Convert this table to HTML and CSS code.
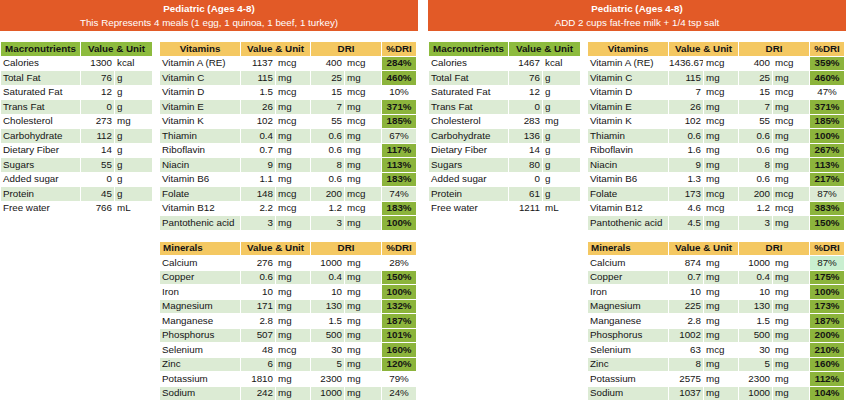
FILE: index.html
```html
<!DOCTYPE html>
<html>
<head>
<meta charset="utf-8">
<link rel="stylesheet" href="styles.css">
</head>
<body>
<div class="page">
  <section class="panel">
    <header class="banner">
      <div class="banner-title">Pediatric (Ages 4-8)</div>
      <div>This Represents 4 meals (1 egg, 1 quinoa, 1 beef, 1 turkey)</div>
    </header>
    <div class="panel-body">
      <table class="tbl macro">
        <colgroup><col class="c-name"><col class="c-num"><col class="c-unit"></colgroup>
        <tr class="head-green"><th class="center">Macronutrients</th><th colspan="2">Value &amp; Unit</th></tr>
        <tr><td class="name">Calories</td><td class="num">1300</td><td class="unit">kcal</td></tr>
        <tr class="alt"><td class="name">Total Fat</td><td class="num">76</td><td class="unit">g</td></tr>
        <tr><td class="name">Saturated Fat</td><td class="num">12</td><td class="unit">g</td></tr>
        <tr class="alt"><td class="name">Trans Fat</td><td class="num">0</td><td class="unit">g</td></tr>
        <tr><td class="name">Cholesterol</td><td class="num">273</td><td class="unit">mg</td></tr>
        <tr class="alt"><td class="name">Carbohydrate</td><td class="num">112</td><td class="unit">g</td></tr>
        <tr><td class="name">Dietary Fiber</td><td class="num">14</td><td class="unit">g</td></tr>
        <tr class="alt"><td class="name">Sugars</td><td class="num">55</td><td class="unit">g</td></tr>
        <tr><td class="name">Added sugar</td><td class="num">0</td><td class="unit">g</td></tr>
        <tr class="alt"><td class="name">Protein</td><td class="num">45</td><td class="unit">g</td></tr>
        <tr><td class="name">Free water</td><td class="num">766</td><td class="unit">mL</td></tr>
      </table>
      <div class="stack">
        <table class="tbl nutr">
          <colgroup><col class="n-name"><col class="n-num"><col class="n-unit"><col class="n-dnum"><col class="n-dunit"><col class="n-pct"></colgroup>
          <tr class="head-yellow"><th>Vitamins</th><th colspan="2">Value &amp; Unit</th><th colspan="2">DRI</th><th>%DRI</th></tr>
          <tr><td class="name">Vitamin A (RE)</td><td class="num">1137</td><td class="unit">mcg</td><td class="dnum">400</td><td class="dunit">mcg</td><td class="pct hi">284%</td></tr>
          <tr class="alt"><td class="name">Vitamin C</td><td class="num">115</td><td class="unit">mg</td><td class="dnum">25</td><td class="dunit">mg</td><td class="pct hi">460%</td></tr>
          <tr><td class="name">Vitamin D</td><td class="num">1.5</td><td class="unit">mcg</td><td class="dnum">15</td><td class="dunit">mcg</td><td class="pct">10%</td></tr>
          <tr class="alt"><td class="name">Vitamin E</td><td class="num">26</td><td class="unit">mg</td><td class="dnum">7</td><td class="dunit">mg</td><td class="pct hi">371%</td></tr>
          <tr><td class="name">Vitamin K</td><td class="num">102</td><td class="unit">mcg</td><td class="dnum">55</td><td class="dunit">mcg</td><td class="pct hi">185%</td></tr>
          <tr class="alt"><td class="name">Thiamin</td><td class="num">0.4</td><td class="unit">mg</td><td class="dnum">0.6</td><td class="dunit">mg</td><td class="pct">67%</td></tr>
          <tr><td class="name">Riboflavin</td><td class="num">0.7</td><td class="unit">mg</td><td class="dnum">0.6</td><td class="dunit">mg</td><td class="pct hi">117%</td></tr>
          <tr class="alt"><td class="name">Niacin</td><td class="num">9</td><td class="unit">mg</td><td class="dnum">8</td><td class="dunit">mg</td><td class="pct hi">113%</td></tr>
          <tr><td class="name">Vitamin B6</td><td class="num">1.1</td><td class="unit">mg</td><td class="dnum">0.6</td><td class="dunit">mg</td><td class="pct hi">183%</td></tr>
          <tr class="alt"><td class="name">Folate</td><td class="num">148</td><td class="unit">mcg</td><td class="dnum">200</td><td class="dunit">mcg</td><td class="pct">74%</td></tr>
          <tr><td class="name">Vitamin B12</td><td class="num">2.2</td><td class="unit">mcg</td><td class="dnum">1.2</td><td class="dunit">mcg</td><td class="pct hi">183%</td></tr>
          <tr class="alt"><td class="name">Pantothenic acid</td><td class="num">3</td><td class="unit">mg</td><td class="dnum">3</td><td class="dunit">mg</td><td class="pct hi">100%</td></tr>
        </table>
        <table class="tbl nutr">
          <colgroup><col class="n-name"><col class="n-num"><col class="n-unit"><col class="n-dnum"><col class="n-dunit"><col class="n-pct"></colgroup>
          <tr class="head-yellow"><th class="left">Minerals</th><th colspan="2">Value &amp; Unit</th><th colspan="2">DRI</th><th>%DRI</th></tr>
          <tr><td class="name">Calcium</td><td class="num">276</td><td class="unit">mg</td><td class="dnum">1000</td><td class="dunit">mg</td><td class="pct">28%</td></tr>
          <tr class="alt"><td class="name">Copper</td><td class="num">0.6</td><td class="unit">mg</td><td class="dnum">0.4</td><td class="dunit">mg</td><td class="pct hi">150%</td></tr>
          <tr><td class="name">Iron</td><td class="num">10</td><td class="unit">mg</td><td class="dnum">10</td><td class="dunit">mg</td><td class="pct hi">100%</td></tr>
          <tr class="alt"><td class="name">Magnesium</td><td class="num">171</td><td class="unit">mg</td><td class="dnum">130</td><td class="dunit">mg</td><td class="pct hi">132%</td></tr>
          <tr><td class="name">Manganese</td><td class="num">2.8</td><td class="unit">mg</td><td class="dnum">1.5</td><td class="dunit">mg</td><td class="pct hi">187%</td></tr>
          <tr class="alt"><td class="name">Phosphorus</td><td class="num">507</td><td class="unit">mg</td><td class="dnum">500</td><td class="dunit">mg</td><td class="pct hi">101%</td></tr>
          <tr><td class="name">Selenium</td><td class="num">48</td><td class="unit">mcg</td><td class="dnum">30</td><td class="dunit">mg</td><td class="pct hi">160%</td></tr>
          <tr class="alt"><td class="name">Zinc</td><td class="num">6</td><td class="unit">mg</td><td class="dnum">5</td><td class="dunit">mg</td><td class="pct hi">120%</td></tr>
          <tr><td class="name">Potassium</td><td class="num">1810</td><td class="unit">mg</td><td class="dnum">2300</td><td class="dunit">mg</td><td class="pct">79%</td></tr>
          <tr class="alt"><td class="name">Sodium</td><td class="num">242</td><td class="unit">mg</td><td class="dnum">1000</td><td class="dunit">mg</td><td class="pct">24%</td></tr>
        </table>
      </div>
    </div>
  </section>

  <section class="panel">
    <header class="banner">
      <div class="banner-title">Pediatric (Ages 4-8)</div>
      <div>ADD 2 cups fat-free milk + 1/4 tsp salt</div>
    </header>
    <div class="panel-body">
      <table class="tbl macro">
        <colgroup><col class="c-name"><col class="c-num"><col class="c-unit"></colgroup>
        <tr class="head-green"><th class="center">Macronutrients</th><th colspan="2">Value &amp; Unit</th></tr>
        <tr><td class="name">Calories</td><td class="num">1467</td><td class="unit">kcal</td></tr>
        <tr class="alt"><td class="name">Total Fat</td><td class="num">76</td><td class="unit">g</td></tr>
        <tr><td class="name">Saturated Fat</td><td class="num">12</td><td class="unit">g</td></tr>
        <tr class="alt"><td class="name">Trans Fat</td><td class="num">0</td><td class="unit">g</td></tr>
        <tr><td class="name">Cholesterol</td><td class="num">283</td><td class="unit">mg</td></tr>
        <tr class="alt"><td class="name">Carbohydrate</td><td class="num">136</td><td class="unit">g</td></tr>
        <tr><td class="name">Dietary Fiber</td><td class="num">14</td><td class="unit">g</td></tr>
        <tr class="alt"><td class="name">Sugars</td><td class="num">80</td><td class="unit">g</td></tr>
        <tr><td class="name">Added sugar</td><td class="num">0</td><td class="unit">g</td></tr>
        <tr class="alt"><td class="name">Protein</td><td class="num">61</td><td class="unit">g</td></tr>
        <tr><td class="name">Free water</td><td class="num">1211</td><td class="unit">mL</td></tr>
      </table>
      <div class="stack">
        <table class="tbl nutr">
          <colgroup><col class="n-name"><col class="n-num"><col class="n-unit"><col class="n-dnum"><col class="n-dunit"><col class="n-pct"></colgroup>
          <tr class="head-yellow"><th>Vitamins</th><th colspan="2">Value &amp; Unit</th><th colspan="2">DRI</th><th>%DRI</th></tr>
          <tr><td class="name">Vitamin A (RE)</td><td class="num">1436.67</td><td class="unit">mcg</td><td class="dnum">400</td><td class="dunit">mcg</td><td class="pct hi">359%</td></tr>
          <tr class="alt"><td class="name">Vitamin C</td><td class="num">115</td><td class="unit">mg</td><td class="dnum">25</td><td class="dunit">mg</td><td class="pct hi">460%</td></tr>
          <tr><td class="name">Vitamin D</td><td class="num">7</td><td class="unit">mcg</td><td class="dnum">15</td><td class="dunit">mcg</td><td class="pct">47%</td></tr>
          <tr class="alt"><td class="name">Vitamin E</td><td class="num">26</td><td class="unit">mg</td><td class="dnum">7</td><td class="dunit">mg</td><td class="pct hi">371%</td></tr>
          <tr><td class="name">Vitamin K</td><td class="num">102</td><td class="unit">mcg</td><td class="dnum">55</td><td class="dunit">mcg</td><td class="pct hi">185%</td></tr>
          <tr class="alt"><td class="name">Thiamin</td><td class="num">0.6</td><td class="unit">mg</td><td class="dnum">0.6</td><td class="dunit">mg</td><td class="pct hi">100%</td></tr>
          <tr><td class="name">Riboflavin</td><td class="num">1.6</td><td class="unit">mg</td><td class="dnum">0.6</td><td class="dunit">mg</td><td class="pct hi">267%</td></tr>
          <tr class="alt"><td class="name">Niacin</td><td class="num">9</td><td class="unit">mg</td><td class="dnum">8</td><td class="dunit">mg</td><td class="pct hi">113%</td></tr>
          <tr><td class="name">Vitamin B6</td><td class="num">1.3</td><td class="unit">mg</td><td class="dnum">0.6</td><td class="dunit">mg</td><td class="pct hi">217%</td></tr>
          <tr class="alt"><td class="name">Folate</td><td class="num">173</td><td class="unit">mcg</td><td class="dnum">200</td><td class="dunit">mcg</td><td class="pct">87%</td></tr>
          <tr><td class="name">Vitamin B12</td><td class="num">4.6</td><td class="unit">mcg</td><td class="dnum">1.2</td><td class="dunit">mcg</td><td class="pct hi">383%</td></tr>
          <tr class="alt"><td class="name">Pantothenic acid</td><td class="num">4.5</td><td class="unit">mg</td><td class="dnum">3</td><td class="dunit">mg</td><td class="pct hi">150%</td></tr>
        </table>
        <table class="tbl nutr">
          <colgroup><col class="n-name"><col class="n-num"><col class="n-unit"><col class="n-dnum"><col class="n-dunit"><col class="n-pct"></colgroup>
          <tr class="head-yellow"><th class="left">Minerals</th><th colspan="2">Value &amp; Unit</th><th colspan="2">DRI</th><th>%DRI</th></tr>
          <tr><td class="name">Calcium</td><td class="num">874</td><td class="unit">mg</td><td class="dnum">1000</td><td class="dunit">mg</td><td class="pct mid">87%</td></tr>
          <tr class="alt"><td class="name">Copper</td><td class="num">0.7</td><td class="unit">mg</td><td class="dnum">0.4</td><td class="dunit">mg</td><td class="pct hi">175%</td></tr>
          <tr><td class="name">Iron</td><td class="num">10</td><td class="unit">mg</td><td class="dnum">10</td><td class="dunit">mg</td><td class="pct hi">100%</td></tr>
          <tr class="alt"><td class="name">Magnesium</td><td class="num">225</td><td class="unit">mg</td><td class="dnum">130</td><td class="dunit">mg</td><td class="pct hi">173%</td></tr>
          <tr><td class="name">Manganese</td><td class="num">2.8</td><td class="unit">mg</td><td class="dnum">1.5</td><td class="dunit">mg</td><td class="pct hi">187%</td></tr>
          <tr class="alt"><td class="name">Phosphorus</td><td class="num">1002</td><td class="unit">mg</td><td class="dnum">500</td><td class="dunit">mg</td><td class="pct hi">200%</td></tr>
          <tr><td class="name">Selenium</td><td class="num">63</td><td class="unit">mcg</td><td class="dnum">30</td><td class="dunit">mg</td><td class="pct hi">210%</td></tr>
          <tr class="alt"><td class="name">Zinc</td><td class="num">8</td><td class="unit">mg</td><td class="dnum">5</td><td class="dunit">mg</td><td class="pct hi">160%</td></tr>
          <tr><td class="name">Potassium</td><td class="num">2575</td><td class="unit">mg</td><td class="dnum">2300</td><td class="dunit">mg</td><td class="pct hi">112%</td></tr>
          <tr class="alt"><td class="name">Sodium</td><td class="num">1037</td><td class="unit">mg</td><td class="dnum">1000</td><td class="dunit">mg</td><td class="pct hi">104%</td></tr>
        </table>
      </div>
    </div>
  </section>
</div>
</body>
</html>
```

FILE: styles.css
```css
* { box-sizing: border-box; }

body {
  margin: 0;
  background: #ffffff;
  color: #141414;
  font-family: "Liberation Sans", Arial, sans-serif;
  font-size: 9.8px;
}

.page {
  display: flex;
  gap: 10px;
  width: 846px;
}

.panel {
  width: 418px;
  flex: 0 0 418px;
}

.banner {
  height: 31px;
  padding-top: 2px;
  background: #e25a27;
  color: #ffffff;
  text-align: center;
  line-height: 13.5px;
}

.banner-title {
  font-weight: bold;
}

.panel-body {
  display: flex;
  align-items: flex-start;
  gap: 6px;
  margin-top: 10px;
}

.stack {
  display: flex;
  flex-direction: column;
  gap: 10px;
}

.tbl {
  border-collapse: separate;
  border-spacing: 1px;
  table-layout: fixed;
}

.tbl th,
.tbl td {
  height: 13.5px;
  padding: 0;
  line-height: 12px;
  white-space: nowrap;
  overflow: hidden;
  vertical-align: middle;
}

.tbl th {
  font-weight: bold;
  text-align: center;
}

.tbl th.left { text-align: left; padding-left: 3px; }

.macro { width: 153px; }
.c-name { width: 79px; }
.c-num { width: 33px; }
.c-unit { width: 37px; }

.nutr { width: 258px; }
.n-name { width: 80px; }
.n-num { width: 34px; }
.n-unit { width: 34px; }
.n-dnum { width: 33px; }
.n-dunit { width: 36px; }
.n-pct { width: 34px; }

.head-green th { background: #8dbb3e; }
.head-yellow th { background: #f4c862; }

.alt td { background: #dcebd4; }

.name { padding-left: 2px !important; }
.num, .dnum { text-align: right; padding-right: 2px !important; }
.unit, .dunit { padding-left: 2px !important; }
.pct { text-align: center; }

.tbl td.hi { background: #8cb43c; font-weight: bold; }
.tbl td.mid { background: #c9efd0; }
```
